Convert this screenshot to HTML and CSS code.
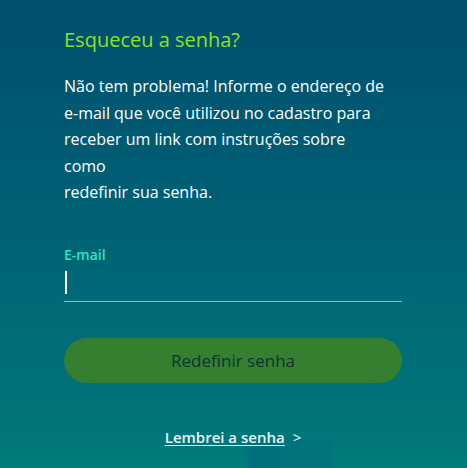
FILE: index.html
```html
<!DOCTYPE html>
<html lang="pt-BR">
<head>
<meta charset="utf-8">
<link rel="stylesheet" href="styles.css">
</head>
<body>
<main class="page">
  <svg class="deco" width="90" height="32" viewBox="0 0 90 32"><rect x="0" y="4" width="36" height="28" fill="#00717b"/><path d="M34 0 L84 1 L84 32 L34 32 Z" fill="#00737c"/></svg>
  <section class="card">
    <h1 class="title">Esqueceu a senha?</h1>
    <p class="intro">Não tem problema! Informe o endereço de e-mail que você utilizou no cadastro para receber um link com instruções sobre<br>como<br>redefinir sua senha.</p>
    <form class="form">
      <label class="label" for="email">E-mail</label>
      <div class="field"><span class="caret"></span></div>
      <button type="button" class="btn">Redefinir senha</button>
    </form>
    <div class="back"><a class="back-link" href="#">Lembrei a senha</a><span class="chev">&gt;</span></div>
  </section>
</main>
</body>
</html>
```
FILE: styles.css
```css
html, body { margin: 0; padding: 0; }
body {
  width: 467px;
  height: 468px;
  overflow: hidden;
  background: linear-gradient(180deg, #004f6e 0%, #006074 45%, #007a7b 100%);
  font-family: "Open Sans", "Liberation Sans", sans-serif;
}
.page { position: relative; height: 468px; }
.card { position: relative; z-index: 1; width: 338px; margin-left: 64px; padding-top: 26px; }
.title {
  margin: 0;
  font-size: 20px;
  line-height: 28px;
  font-weight: 400;
  color: #8fe31c;
}
.intro {
  margin: 19px 0 0;
  font-size: 16px;
  line-height: 26.6px;
  color: #ffffff;
}
.form { display: flex; flex-direction: column; margin-top: 39px; }
.label { font-size: 14px; line-height: 20px; font-weight: 600; color: #2fe6c0; }
.field {
  height: 36px;
  border-bottom: 1.5px solid #2fe6c8;
  display: flex;
  align-items: center;
}
.caret { width: 2px; height: 23px; background: #fff; margin-left: 1px; }
.btn {
  margin-top: 36px;
  height: 45px;
  border: 0;
  border-radius: 23px;
  background: #367f30;
  color: #0b3532;
  font-family: inherit;
  font-size: 17px;
  font-weight: 500;
}
.back {
  margin-top: 44px;
  display: flex;
  justify-content: center;
  gap: 8px;
  font-size: 15px;
  line-height: 20px;
  color: #e8f4f4;
  font-weight: 600;
}
.back-link { color: #e8f4f4; text-decoration: underline; text-underline-offset: 2px; }
.chev { font-weight: 400; }
.deco { position: absolute; left: 248px; top: 438px; }
```
